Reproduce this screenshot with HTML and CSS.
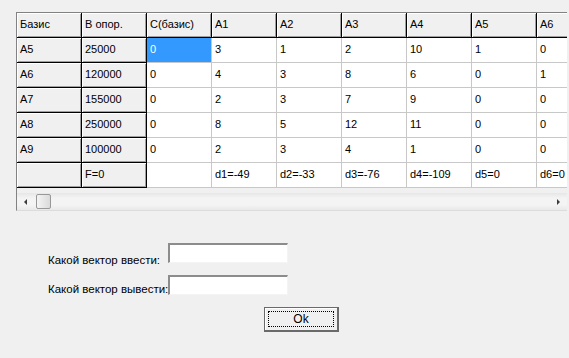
FILE: index.html
```html
<!DOCTYPE html>
<html lang="ru">
<head>
    <meta charset="UTF-8">
    <title>Симплекс-метод</title>
    <link rel="stylesheet" href="styles.css">
</head>
<body>
    <div class="grid">
        <div class="cells">
            <table class="sheet">
                <tr>
                    <td class="fx">Базис</td>
                    <td class="fx">В опор.</td>
                    <td class="fx">C(базис)</td>
                    <td class="fx">A1</td>
                    <td class="fx">A2</td>
                    <td class="fx">A3</td>
                    <td class="fx">A4</td>
                    <td class="fx">A5</td>
                    <td class="fx">A6</td>
                </tr>
                <tr>
                    <td class="fx">A5</td>
                    <td class="fx">25000</td>
                    <td class="sel">0</td>
                    <td>3</td><td>1</td><td>2</td><td>10</td><td>1</td><td>0</td>
                </tr>
                <tr>
                    <td class="fx">A6</td>
                    <td class="fx">120000</td>
                    <td>0</td>
                    <td>4</td><td>3</td><td>8</td><td>6</td><td>0</td><td>1</td>
                </tr>
                <tr>
                    <td class="fx">A7</td>
                    <td class="fx">155000</td>
                    <td>0</td>
                    <td>2</td><td>3</td><td>7</td><td>9</td><td>0</td><td>0</td>
                </tr>
                <tr>
                    <td class="fx">A8</td>
                    <td class="fx">250000</td>
                    <td>0</td>
                    <td>8</td><td>5</td><td>12</td><td>11</td><td>0</td><td>0</td>
                </tr>
                <tr>
                    <td class="fx">A9</td>
                    <td class="fx">100000</td>
                    <td>0</td>
                    <td>2</td><td>3</td><td>4</td><td>1</td><td>0</td><td>0</td>
                </tr>
                <tr>
                    <td class="fx"></td>
                    <td class="fx">F=0</td>
                    <td></td>
                    <td>d1=-49</td><td>d2=-33</td><td>d3=-76</td><td>d4=-109</td><td>d5=0</td><td>d6=0</td>
                </tr>
            </table>
        </div>
        <div class="hscroll">
            <span class="arrow arrow-left"></span>
            <span class="thumb"></span>
            <span class="track"></span>
            <span class="arrow arrow-right"></span>
        </div>
    </div>

    <div class="form">
        <label class="lbl lbl-first" for="vec-in">Какой вектор ввести:</label>
        <input class="field" id="vec-in" type="text">
        <label class="lbl lbl-second" for="vec-out">Какой вектор вывести:</label>
        <input class="field" id="vec-out" type="text">
    </div>
    <div class="actions">
        <button class="ok-btn"><span class="focus">Ok</span></button>
    </div>
</body>
</html>
```

FILE: styles.css
```css
body {
    margin: 0;
    background-color: #f0f0f0;
    font-family: "Liberation Sans", Arial, sans-serif;
    font-size: 11px;
    color: #000;
    overflow: hidden;
}

/* string grid with its frame */
.grid {
    margin: 12px 0 0 16px;
    width: 550px;
    border-left: 1px solid #828282;
    border-top: 1px solid #828282;
    border-bottom: 1px solid #dcdcdc;
}

.cells {
    overflow: hidden;
    height: 175px;
}

.sheet {
    border-collapse: separate;
    border-spacing: 0;
    table-layout: fixed;
}

.sheet td {
    width: 61px;
    min-width: 61px;
    height: 19px;
    padding: 5px 0 0 3px;
    vertical-align: top;
    line-height: 13px;
    white-space: nowrap;
    background-color: #fff;
    border-right: 1px solid #c8c8c8;
    border-bottom: 1px solid #c8c8c8;
}

.sheet td.fx {
    background-color: #f0f0f0;
    border-right-color: #000;
    border-bottom-color: #000;
    box-shadow: inset 1px 1px #fff, inset -1px -1px #a0a0a0;
}

.sheet td.sel {
    background-color: #3399ff;
    color: #fff;
}

/* horizontal scroll bar */
.hscroll {
    display: flex;
    align-items: center;
    height: 17px;
    margin-top: 5px;
    background: linear-gradient(#e6e6e6, #f4f4f4 30%, #f4f4f4 70%, #e9e9e9);
}

.arrow {
    width: 17px;
    height: 17px;
    flex: none;
    display: flex;
    align-items: center;
    justify-content: center;
}

.arrow::before {
    content: "";
    border-top: 3px solid transparent;
    border-bottom: 3px solid transparent;
}

.arrow-left::before {
    border-right: 3px solid #3c3c3c;
}

.arrow-right::before {
    border-left: 3px solid #3c3c3c;
}

.thumb {
    width: 13px;
    height: 13px;
    margin-left: 2px;
    flex: none;
    border: 1px solid #989898;
    border-radius: 2px;
    background: linear-gradient(to right, #f4f4f4, #dadada);
}

.track {
    flex: 1;
}

/* vector inputs */
.form {
    display: grid;
    grid-template-columns: 120px 120px;
    grid-template-rows: 20px 20px;
    row-gap: 12px;
    margin: 32px 0 0 48px;
}

.lbl {
    font-size: 11.5px;
    line-height: 13px;
    white-space: nowrap;
}

.lbl-first {
    padding-top: 11px;
}

.lbl-second {
    padding-top: 8px;
}

.field {
    box-sizing: border-box;
    width: 120px;
    height: 20px;
    margin: 0;
    padding: 0 3px;
    font: inherit;
    background-color: #fff;
    border-style: solid;
    border-width: 2px 1px 1px 2px;
    border-color: #8c8c8c #f4f4f4 #f4f4f4 #8c8c8c;
    outline: none;
}

.actions {
    margin: 12px 0 0 264px;
}

.ok-btn {
    box-sizing: border-box;
    width: 75px;
    height: 25px;
    padding: 3px;
    font: inherit;
    color: #000;
    background-color: #f0f0f0;
    border: 1px solid #6a6a6a;
    border-right-width: 2px;
    border-bottom-width: 2px;
    box-shadow: inset 1px 1px #fff;
    cursor: pointer;
}

.ok-btn .focus {
    display: flex;
    align-items: center;
    justify-content: center;
    height: 100%;
    border: 1px dotted #000;
    box-sizing: border-box;
    font-size: 12px;
}
```
